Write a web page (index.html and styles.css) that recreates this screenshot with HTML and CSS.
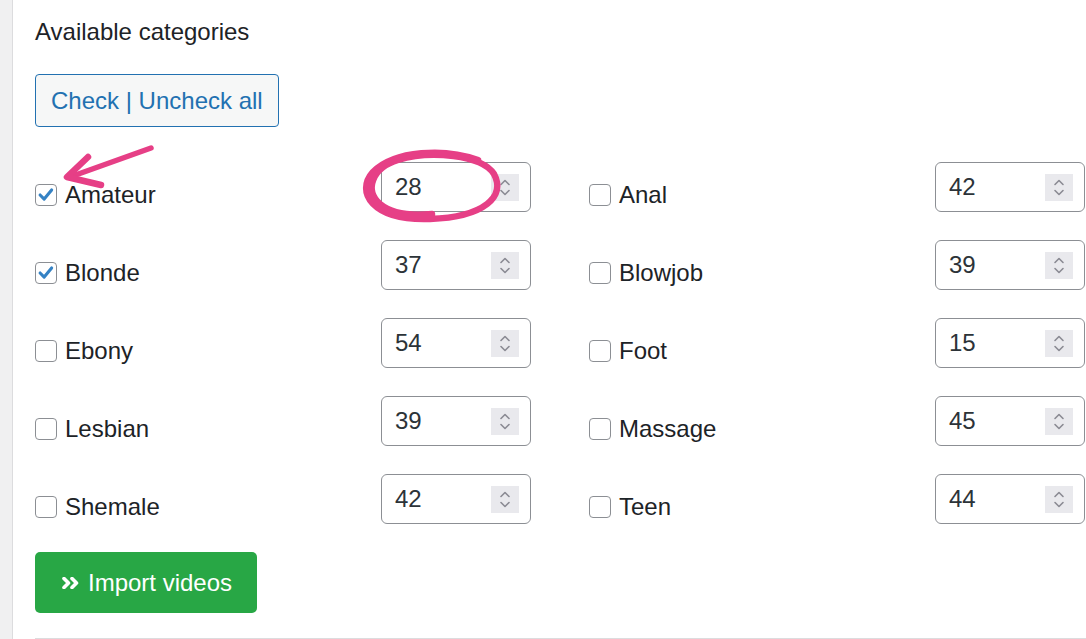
FILE: index.html
```html
<!DOCTYPE html>
<html lang="en">
<head>
<meta charset="utf-8">
<title>Available categories</title>
<link rel="stylesheet" href="styles.css">
</head>
<body>
<div class="page">
  <aside class="side"></aside>
  <main class="main">
    <h2 class="title">Available categories</h2>
    <button class="btn-toggle" type="button">Check | Uncheck all</button>

    <div class="grid">
      <div class="cell">
        <label class="cat"><span class="cb checked"><svg viewBox="0 0 22 22"><path d="M4.5 11 L9 15.5 L17.2 5.5"/></svg></span>Amateur</label>
        <div class="num"><span class="val">28</span><span class="spin"><svg viewBox="0 0 28 27"><path d="M10 10.5 L14 6.5 L18 10.5 M10 16.5 L14 20.5 L18 16.5"/></svg></span></div>
      </div>
      <div class="cell">
        <label class="cat"><span class="cb"></span>Anal</label>
        <div class="num"><span class="val">42</span><span class="spin"><svg viewBox="0 0 28 27"><path d="M10 10.5 L14 6.5 L18 10.5 M10 16.5 L14 20.5 L18 16.5"/></svg></span></div>
      </div>

      <div class="cell">
        <label class="cat"><span class="cb checked"><svg viewBox="0 0 22 22"><path d="M4.5 11 L9 15.5 L17.2 5.5"/></svg></span>Blonde</label>
        <div class="num"><span class="val">37</span><span class="spin"><svg viewBox="0 0 28 27"><path d="M10 10.5 L14 6.5 L18 10.5 M10 16.5 L14 20.5 L18 16.5"/></svg></span></div>
      </div>
      <div class="cell">
        <label class="cat"><span class="cb"></span>Blowjob</label>
        <div class="num"><span class="val">39</span><span class="spin"><svg viewBox="0 0 28 27"><path d="M10 10.5 L14 6.5 L18 10.5 M10 16.5 L14 20.5 L18 16.5"/></svg></span></div>
      </div>

      <div class="cell">
        <label class="cat"><span class="cb"></span>Ebony</label>
        <div class="num"><span class="val">54</span><span class="spin"><svg viewBox="0 0 28 27"><path d="M10 10.5 L14 6.5 L18 10.5 M10 16.5 L14 20.5 L18 16.5"/></svg></span></div>
      </div>
      <div class="cell">
        <label class="cat"><span class="cb"></span>Foot</label>
        <div class="num"><span class="val">15</span><span class="spin"><svg viewBox="0 0 28 27"><path d="M10 10.5 L14 6.5 L18 10.5 M10 16.5 L14 20.5 L18 16.5"/></svg></span></div>
      </div>

      <div class="cell">
        <label class="cat"><span class="cb"></span>Lesbian</label>
        <div class="num"><span class="val">39</span><span class="spin"><svg viewBox="0 0 28 27"><path d="M10 10.5 L14 6.5 L18 10.5 M10 16.5 L14 20.5 L18 16.5"/></svg></span></div>
      </div>
      <div class="cell">
        <label class="cat"><span class="cb"></span>Massage</label>
        <div class="num"><span class="val">45</span><span class="spin"><svg viewBox="0 0 28 27"><path d="M10 10.5 L14 6.5 L18 10.5 M10 16.5 L14 20.5 L18 16.5"/></svg></span></div>
      </div>

      <div class="cell">
        <label class="cat"><span class="cb"></span>Shemale</label>
        <div class="num"><span class="val">42</span><span class="spin"><svg viewBox="0 0 28 27"><path d="M10 10.5 L14 6.5 L18 10.5 M10 16.5 L14 20.5 L18 16.5"/></svg></span></div>
      </div>
      <div class="cell">
        <label class="cat"><span class="cb"></span>Teen</label>
        <div class="num"><span class="val">44</span><span class="spin"><svg viewBox="0 0 28 27"><path d="M10 10.5 L14 6.5 L18 10.5 M10 16.5 L14 20.5 L18 16.5"/></svg></span></div>
      </div>
    </div>

    <button class="btn-import" type="button"><svg class="dchev" viewBox="0 0 18 12"><path d="M2 1.5 L6.5 6 L2 10.5 M10 1.5 L14.5 6 L10 10.5"/></svg>Import videos</button>
    <hr class="rule">
  </main>

  <svg class="annot" viewBox="0 0 1086 639" width="1086" height="639">
    <path class="thin" d="M151 148 Q 115 161, 70 177"/>
    <path d="M88 157 L 67 177 L 101 185"/>
    <path d="M478 160 C 445 148, 395 150, 373 172 C 355 192, 372 221, 430 219 C 485 217, 506 196, 494 174 C 482 155, 430 150, 398 160 C 372 168, 364 190, 380 204 C 392 214, 412 216, 432 214"/>
  </svg>
</div>
</body>
</html>
```

FILE: styles.css
```css
* { box-sizing: border-box; }

html, body {
  margin: 0;
  padding: 0;
  background: #ffffff;
}

body {
  font-family: "Liberation Sans", Arial, sans-serif;
  font-size: 24px;
  line-height: 28px;
  color: #1d2327;
  overflow: hidden;
}

.page {
  position: relative;
  display: flex;
  width: 1086px;
  height: 639px;
}

.side {
  flex: 0 0 13px;
  background: #f0f0f1;
  border-right: 1px solid #dcdcde;
}

.main {
  flex: 1;
  padding: 18px 0 0 22px;
  display: flex;
  flex-direction: column;
  align-items: flex-start;
}

.title {
  margin: 0;
  font-size: 24px;
  font-weight: 400;
  line-height: 28px;
  color: #1d2327;
}

.btn-toggle {
  margin-top: 28px;
  height: 53px;
  padding: 0 15px;
  border: 1px solid #2271b1;
  border-radius: 4px;
  background: #f6f7f7;
  color: #2271b1;
  font-family: inherit;
  font-size: 24px;
  line-height: 28px;
}

.grid {
  margin-top: 35px;
  display: grid;
  grid-template-columns: 496px 496px;
  column-gap: 58px;
  row-gap: 28px;
}

.cell {
  display: flex;
  justify-content: space-between;
  align-items: flex-start;
  height: 50px;
}

.cat {
  margin-top: 19px;
  display: flex;
  align-items: center;
  gap: 8px;
  color: #1d2327;
}

.cb {
  width: 22px;
  height: 22px;
  border: 1px solid #8c8f94;
  border-radius: 4px;
  background: #fff;
  display: flex;
}

.cb svg {
  width: 20px;
  height: 20px;
  fill: none;
  stroke: #3582c4;
  stroke-width: 3.4;
  stroke-linecap: round;
  stroke-linejoin: round;
}

.num {
  width: 150px;
  height: 50px;
  border: 1px solid #8c8f94;
  border-radius: 6px;
  background: #fff;
  display: flex;
  align-items: center;
  justify-content: space-between;
  padding: 0 11px 0 13px;
  color: #2c3338;
}

.spin {
  width: 28px;
  height: 27px;
  background: #e9e9ed;
  display: flex;
}

.spin svg {
  width: 28px;
  height: 27px;
  fill: none;
  stroke: #8a8a93;
  stroke-width: 1.6;
  stroke-linecap: round;
  stroke-linejoin: round;
}

.btn-import {
  margin-top: 28px;
  height: 61px;
  width: 222px;
  padding: 0 0 0 27px;
  border: 0;
  border-radius: 5px;
  background: #28a745;
  color: #fff;
  font-family: inherit;
  font-size: 24px;
  line-height: 28px;
  display: flex;
  align-items: center;
  gap: 8px;
}

.dchev {
  width: 18px;
  height: 12px;
  fill: none;
  stroke: #fff;
  stroke-width: 3.6;
  stroke-linecap: round;
  stroke-linejoin: round;
}

.rule {
  margin: 25px 0 0 0;
  width: 1051px;
  border: 0;
  border-top: 1px solid #dcdcde;
  height: 0;
}

.annot {
  position: absolute;
  left: 0;
  top: 0;
  pointer-events: none;
  fill: none;
  stroke: #e63f86;
  stroke-width: 6.5;
  stroke-linecap: round;
  stroke-linejoin: round;
}

.annot .thin {
  stroke-width: 5.5;
}
```
